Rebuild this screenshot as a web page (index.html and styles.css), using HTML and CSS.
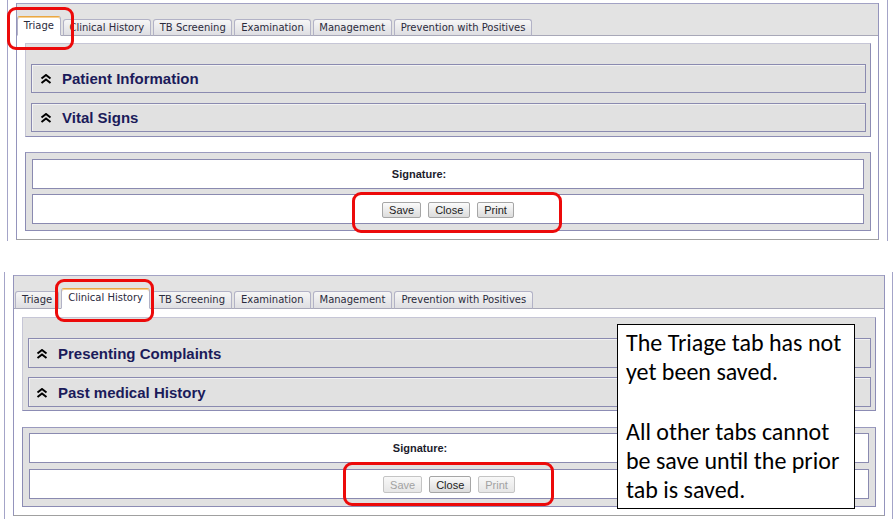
FILE: index.html
```html
<!DOCTYPE html>
<html>
<head>
<meta charset="utf-8">
<title>Tabs save order</title>
<link rel="stylesheet" href="styles.css">
</head>
<body>
<div class="page">

  <section class="shot shot-a">
    <div class="frame">
      <div class="tabbar">
        <div class="tab active">Triage</div>
        <div class="tab">Clinical History</div>
        <div class="tab">TB Screening</div>
        <div class="tab">Examination</div>
        <div class="tab">Management</div>
        <div class="tab">Prevention with Positives</div>
      </div>
      <div class="frame-body">
        <div class="panel">
          <div class="section">
            <svg class="chev" width="12" height="10" viewBox="0 0 12 10"><path d="M1.5 4.5 L6 1 L10.5 4.5 M1.5 9 L6 5.5 L10.5 9" fill="none" stroke="#000" stroke-width="2"/></svg>
            <span class="section-title">Patient Information</span>
          </div>
          <div class="section">
            <svg class="chev" width="12" height="10" viewBox="0 0 12 10"><path d="M1.5 4.5 L6 1 L10.5 4.5 M1.5 9 L6 5.5 L10.5 9" fill="none" stroke="#000" stroke-width="2"/></svg>
            <span class="section-title">Vital Signs</span>
          </div>
        </div>
        <div class="sigframe">
          <div class="sigrow">Signature:</div>
          <div class="sigrow buttons">
            <button class="btn">Save</button>
            <button class="btn">Close</button>
            <button class="btn">Print</button>
          </div>
        </div>
      </div>
    </div>
  </section>

  <section class="shot shot-b">
    <div class="frame">
      <div class="tabbar">
        <div class="tab">Triage</div>
        <div class="tab active">Clinical History</div>
        <div class="tab">TB Screening</div>
        <div class="tab">Examination</div>
        <div class="tab">Management</div>
        <div class="tab">Prevention with Positives</div>
      </div>
      <div class="frame-body">
        <div class="panel">
          <div class="section">
            <svg class="chev" width="12" height="10" viewBox="0 0 12 10"><path d="M1.5 4.5 L6 1 L10.5 4.5 M1.5 9 L6 5.5 L10.5 9" fill="none" stroke="#000" stroke-width="2"/></svg>
            <span class="section-title">Presenting Complaints</span>
          </div>
          <div class="section">
            <svg class="chev" width="12" height="10" viewBox="0 0 12 10"><path d="M1.5 4.5 L6 1 L10.5 4.5 M1.5 9 L6 5.5 L10.5 9" fill="none" stroke="#000" stroke-width="2"/></svg>
            <span class="section-title">Past medical History</span>
          </div>
        </div>
        <div class="sigframe">
          <div class="sigrow">Signature:</div>
          <div class="sigrow buttons">
            <button class="btn" disabled>Save</button>
            <button class="btn">Close</button>
            <button class="btn" disabled>Print</button>
          </div>
        </div>
      </div>
    </div>
  </section>

  <div class="note">
    <p>The Triage tab has not<br>yet been saved.</p>
    <p>All other tabs cannot<br>be save until the prior<br>tab is saved.</p>
  </div>

  <div class="mark mark-1"></div>
  <div class="mark mark-2"></div>
  <div class="mark mark-3"></div>
  <div class="mark mark-4"></div>
</div>
</body>
</html>
```

FILE: styles.css
```css
* { box-sizing: border-box; }

html, body {
  margin: 0;
  padding: 0;
  background: #fff;
}

body {
  font-family: "Liberation Sans", Arial, sans-serif;
  width: 896px;
  height: 519px;
  overflow: hidden;
}

.page {
  position: relative;
  width: 896px;
  height: 519px;
}

/* ---------- screenshot frames ---------- */
.shot {
  border-left: 1px solid #a4a4c8;
  border-right: 1px solid #a4a4c8;
}

.shot-a {
  margin-left: 7px;
  width: 881px;
  height: 241px;
  padding: 3px 8px 0 8px;
}

.shot-b {
  margin-top: 31px;
  margin-left: 4px;
  width: 889px;
  height: 247px;
  padding: 3px 7px 0 8px;
}

.frame {
  border-left: 1px solid #9494bc;
  border-right: 1px solid #9494bc;
  border-bottom: 1px solid #a0a0a0;
}

.shot-a .frame { width: 863px; }
.shot-b .frame { width: 872px; }

/* ---------- tab bar ---------- */
.tabbar {
  display: flex;
  align-items: flex-end;
  gap: 2px;
  background: #e3e3e3;
  border-top: 1px solid #a2a2c4;
  border-bottom: 1px solid #a8a8b8;
}

.shot-a .tabbar { height: 33px; padding-left: 0; }
.shot-b .tabbar { height: 34px; padding-left: 1px; }

.tab {
  font-family: "DejaVu Sans", Verdana, sans-serif;
  font-size: 10px;
  color: #2b2b3c;
  height: 17px;
  line-height: 15px;
  padding: 0 5.75px;
  margin-bottom: -1px;
  border: 1px solid #b2b2c6;
  border-bottom-color: #a8a8b8;
  border-radius: 3px 3px 0 0;
  background: linear-gradient(#f6f6f6, #dedee2);
  white-space: nowrap;
}

.tab.active {
  height: 20px;
  line-height: 18px;
  background: #fff;
  border-top: 1px solid #e9a744;
  border-bottom-color: #fff;
  box-shadow: inset 0 1px 0 #f6cf90;
}

.shot-b .tab { height: 18px; line-height: 16px; padding: 0 6px; }
.shot-b .tab.active { height: 21px; line-height: 18px; }

/* ---------- body ---------- */
.frame-body { background: #fff; }
.shot-a .frame-body { padding: 7px 7px 8px 8px; }
.shot-b .frame-body { padding: 8px 8px 8px 8px; }

.panel {
  background: #e1e1e1;
  border: 1px solid #c6c6d6;
  border-right-color: #8c8cb4;
  border-bottom-color: #8c8cb4;
  display: flex;
  flex-direction: column;
}

.shot-a .panel { padding: 20px 4px 4px 5px; gap: 10px; }
.shot-b .panel { padding: 20px 4px 3px 5px; gap: 9px; }

.section {
  display: flex;
  align-items: center;
  height: 29px;
  padding-left: 8px;
  background: #e1e1e1;
  border: 1px solid #8a8ab0;
  box-shadow: inset 1px 1px 0 #f2f2f2;
}

.shot-b .section { height: 30px; padding-left: 7px; }

.chev { flex: none; margin-right: 10px; margin-top: 1px; }

.section-title {
  font-family: "Liberation Sans", Arial, sans-serif;
  font-weight: bold;
  font-size: 15px;
  color: #1b1b5a;
}

.sigframe {
  margin-top: 15px;
  background: #e1e1e1;
  border: 1px solid #8c8cb4;
  border-top-color: #9a9abe;
  display: flex;
  flex-direction: column;
  gap: 5px;
  padding: 6px;
}

.shot-b .sigframe { margin-top: 16px; padding: 5px 6px 7px 6px; gap: 6px; }

.sigrow {
  height: 30px;
  background: #fff;
  border: 1px solid #8a8ab0;
  display: flex;
  align-items: center;
  justify-content: center;
  font-size: 11px;
  font-weight: bold;
  color: #1c1c2c;
  padding-right: 58px;
}

.sigrow.buttons {
  gap: 7px;
  padding-right: 0;
  padding-top: 1px;
}

.btn {
  font-family: "Liberation Sans", Arial, sans-serif;
  font-size: 11px;
  color: #222;
  height: 16px;
  padding: 0 6px;
  line-height: 14px;
  border: 1px solid #a6a6a6;
  border-radius: 2px;
  background: linear-gradient(#fbfbfb, #dcdcdc);
}

.btn:disabled {
  color: #a2a2a2;
  border-color: #c4c4c4;
  background: linear-gradient(#f8f8f8, #e6e6e6);
}

.shot-b .btn { height: 17px; }

/* ---------- annotation ---------- */
.note {
  position: absolute;
  left: 617px;
  top: 324px;
  width: 238px;
  height: 185px;
  background: #fff;
  border: 1px solid #000;
  padding: 3px 0 0 8px;
  font-family: "Carlito", "Lato", sans-serif;
  font-size: 24px;
  line-height: 29px;
  color: #000;
  white-space: nowrap;
}

.note p { margin: 0 0 31px 0; }

.mark {
  position: absolute;
  border: 3px solid #ec0a0a;
  border-radius: 9px;
}

.mark-1 { left: 7px; top: 7px; width: 67px; height: 43px; }
.mark-2 { left: 352px; top: 192px; width: 210px; height: 41px; }
.mark-3 { left: 55px; top: 279px; width: 99px; height: 43px; }
.mark-4 { left: 343px; top: 462px; width: 211px; height: 44px; }
```
